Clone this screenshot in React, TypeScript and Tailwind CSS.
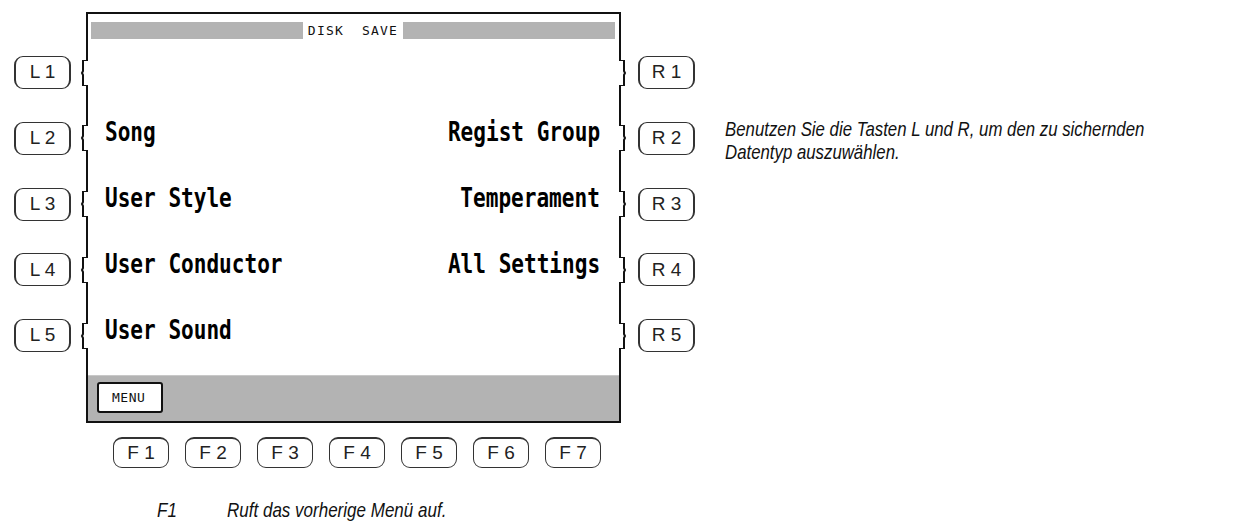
import React from "react";

const leftItems = ["", "Song", "User Style", "User Conductor", "User Sound"];
const rightItems = ["", "Regist Group", "Temperament", "All Settings", ""];

function Bracket({ side }: { side: "left" | "right" }) {
  return (
    <svg width="10" height="26" viewBox="0 0 10 26" className="relative z-10 block shrink-0">
      {side === "left" ? (
        <>
          <rect x="5" y="1" width="5" height="24" fill="white" />
          <path d="M9 0 H5 V11 L4 13 L5 15 V26 H9" fill="none" stroke="#111" strokeWidth="2" />
        </>
      ) : (
        <>
          <rect x="0" y="1" width="5" height="24" fill="white" />
          <path d="M1 0 H5 V11 L6 13 L5 15 V26 H1" fill="none" stroke="#111" strokeWidth="2" />
        </>
      )}
    </svg>
  );
}

function SideKey({ label }: { label: string }) {
  return (
    <div className="w-[57px] h-[33px] shrink-0 flex items-center justify-center rounded-[9px] border-x-2 border-y border-[#333] text-[19px] text-[#222] font-['Liberation_Sans',sans-serif] whitespace-pre">
      {label}
    </div>
  );
}

function ScreenRow({ left, right }: { left: string; right: string }) {
  return (
    <div className="h-[66px] pb-[14px] flex items-center justify-between pl-[17px] pr-[19px] font-['DejaVu_Sans_Mono',monospace] font-bold text-[27px] leading-none text-black">
      <span className="inline-block scale-x-[0.78] origin-left whitespace-pre">{left}</span>
      <span className="inline-block scale-x-[0.78] origin-right whitespace-pre">{right}</span>
    </div>
  );
}

function Screen() {
  return (
    <div className="mt-[12px] w-[535px] h-[411px] shrink-0 border-2 border-[#111] bg-white flex flex-col">
      <div className="mt-[8px] ml-[3px] mr-[4px] h-[17px] flex items-center">
        <div className="flex-1 h-full bg-[#b3b3b3]" />
        <div className="px-[5px] font-['DejaVu_Sans_Mono',monospace] text-[13px] tracking-[1.2px] text-[#111] whitespace-pre leading-none">
          DISK  SAVE
        </div>
        <div className="flex-1 h-full bg-[#b3b3b3]" />
      </div>
      <div className="flex flex-col">
        {leftItems.map((l, i) => (
          <ScreenRow key={i} left={l} right={rightItems[i]} />
        ))}
      </div>
      <div className="flex-1" />
      <div className="h-[46px] bg-[#b3b3b3] border-t border-[#c8c8c8] pt-[6px] pl-[9px]">
        <div className="w-[66px] h-[31px] border-2 border-[#111] rounded-[3px] bg-white flex items-center pl-[13px] font-['DejaVu_Sans_Mono',monospace] text-[13px] tracking-[0.5px] text-[#111]">
          MENU
        </div>
      </div>
    </div>
  );
}

export default function App() {
  const fKeys = ["F 1", "F 2", "F 3", "F 4", "F 5", "F 6", "F 7"];
  return (
    <div className="w-[1233px] h-[531px] bg-white overflow-hidden">
      <div className="flex">
        <div className="w-[86px] shrink-0 pt-[56px] flex flex-col gap-[32.75px]">
          {[1, 2, 3, 4, 5].map((n) => (
            <div key={n} className="h-[33px] flex items-center pl-[14px] -mr-[2px]">
              <SideKey label={`L ${n}`} />
              <div className="flex-1" />
              <Bracket side="left" />
            </div>
          ))}
        </div>
        <Screen />
        <div className="w-[76px] shrink-0 pt-[56px] flex flex-col gap-[32.75px] -ml-[2px]">
          {[1, 2, 3, 4, 5].map((n) => (
            <div key={n} className="h-[33px] flex items-center">
              <Bracket side="right" />
              <div className="w-[9px]" />
              <SideKey label={`R ${n}`} />
            </div>
          ))}
        </div>
        <div className="pt-[117px] pl-[30px] font-['Liberation_Sans',sans-serif] italic text-[21px] leading-[23px] text-[#111]">
          <div className="whitespace-nowrap scale-x-[0.8] origin-left">Benutzen Sie die Tasten L und R, um den zu sichernden</div>
          <div className="whitespace-nowrap scale-x-[0.8] origin-left">Datentyp auszuwählen.</div>
        </div>
      </div>
      <div className="mt-[14px] pl-[113px] flex gap-[16px]">
        {fKeys.map((k) => (
          <div
            key={k}
            className="w-[56px] h-[31px] flex items-center justify-center rounded-[9px] border-[1.5px] border-[#333] border-t-2 text-[19px] text-[#222] font-['Liberation_Sans',sans-serif] whitespace-pre"
          >
            {k}
          </div>
        ))}
      </div>
      <div className="mt-[30px] pl-[157px] flex font-['Liberation_Sans',sans-serif] italic text-[21px] leading-[24px] text-[#111]">
        <span className="w-[70px] scale-x-[0.81] origin-left">F1</span>
        <span className="whitespace-nowrap scale-x-[0.81] origin-left">Ruft das vorherige Menü auf.</span>
      </div>
    </div>
  );
}
